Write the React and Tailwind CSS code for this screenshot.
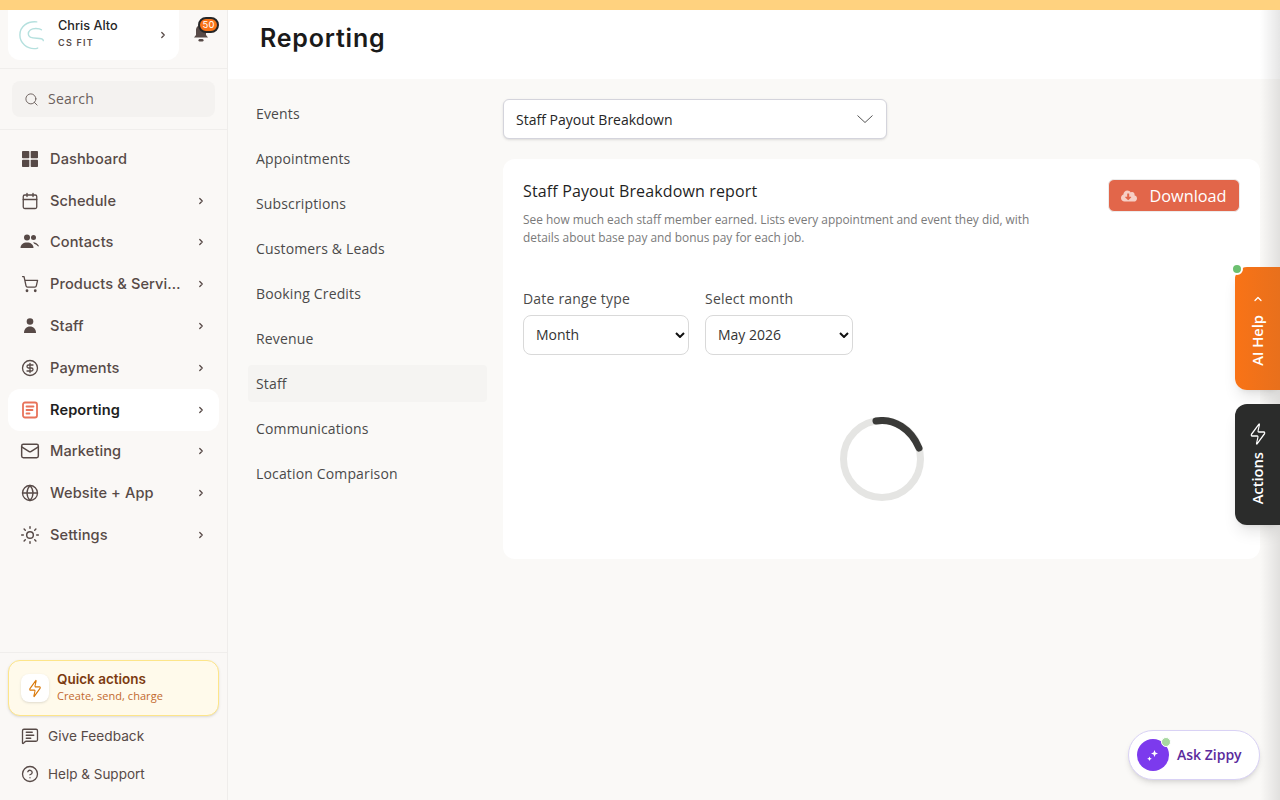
import { ChevronRight, ChevronUp, Search, Calendar, ShoppingCart, CircleDollarSign, Mail, Globe, Sun, MessageSquareText, CircleHelp, Zap } from "lucide-react";
import { FaCloudDownloadAlt } from "react-icons/fa";

const NAV = [
  { label: "Dashboard", icon: DashIcon, noArrow: true },
  { label: "Schedule", icon: Calendar },
  { label: "Contacts", icon: ContactsIcon, big: true },
  { label: "Products & Services", icon: ShoppingCart },
  { label: "Staff", icon: StaffIcon },
  { label: "Payments", icon: CircleDollarSign },
  { label: "Reporting", icon: ReportIcon, active: true },
  { label: "Marketing", icon: Mail, big: true },
  { label: "Website + App", icon: Globe },
  { label: "Settings", icon: Sun, big: true },
];

const REPORTS = ["Events", "Appointments", "Subscriptions", "Customers & Leads", "Booking Credits", "Revenue", "Staff", "Communications", "Location Comparison"];

function DashIcon({ className }) {
  return (
    <svg viewBox="0 0 18 18" className={className} fill="currentColor">
      <rect x="1" y="1" width="7.300" height="7.300" rx="0.800" />
      <rect x="9.700" y="1" width="7.300" height="7.300" rx="0.800" />
      <rect x="1" y="9.700" width="7.300" height="7.300" rx="0.800" />
      <rect x="9.700" y="9.700" width="7.300" height="7.300" rx="0.800" />
    </svg>
  );
}

function ContactsIcon({ className }) {
  return (
    <svg viewBox="0 0 20 18" className={className} fill="currentColor">
      <circle cx="7" cy="4.500" r="3" />
      <circle cx="13.500" cy="4.500" r="2.500" />
      <path d="M0.500 15c0-3.500 2.800-5.500 6.500-5.500s6.500 2 6.500 5.500z" />
      <path d="M13 9.200c2.500 0 4.800 1.300 6 3.800l-.8.500c-1-1.300-2.700-2.300-4-2.800z" />
    </svg>
  );
}

function StaffIcon({ className }) {
  return (
    <svg viewBox="0 0 18 18" className={className} fill="currentColor">
      <circle cx="9" cy="4.500" r="3.300" />
      <path d="M3 16c0-3.900 2.500-6.500 6-6.500s6 2.600 6 6.500z" />
    </svg>
  );
}

function ReportIcon({ className }) {
  return (
    <svg viewBox="0 0 18 18" className={className} fill="none" stroke="currentColor" strokeWidth="1.800" strokeLinecap="round">
      <rect x="2" y="1.500" width="14" height="15" rx="2" />
      <path d="M5.500 5.500h7M5.500 9h6M5.500 12.500h3" />
    </svg>
  );
}

function Logo() {
  return (
    <svg viewBox="0 0 32 32" className="w-[30px] h-[30px]" fill="none" stroke="#b5e0de" strokeWidth="1.500" strokeLinecap="round">
      <path d="M20 2C10 1 2 7 2 16s8 14.500 15 14.500c2 0 3-.2 4-.6" />
      <path d="M25 10.500c-1-1-3-1.500-6-1.500-5 0-8 2.500-8 6s4 4.500 9 4.500c5 0 7 .8 7 2.500" />
    </svg>
  );
}

function Sparkle({ className }) {
  return (
    <svg viewBox="0 0 16 16" className={className} fill="currentColor">
      <path d="M9.500 3l1 2.500 2.500 1-2.500 1-1 2.500-1-2.500-2.500-1 2.500-1z" />
      <path d="M4.500 9.500l.7 1.600 1.600.7-1.600.7-.7 1.600-.7-1.600-1.600-.7 1.600-.7z" />
    </svg>
  );
}

function NavItem({ item }) {
  const Icon = item.icon;
  return (
    <div className={`h-[41.8px] flex items-center pl-[13px] pr-[12px] rounded-xl ${item.active ? "bg-white text-[#1f1f1f] font-semibold" : "text-[#574a47] font-medium"}`}>
      <Icon className={`shrink-0 ${item.big ? "w-[20px] h-[20px] -mx-[1px]" : "w-[18px] h-[18px]"} ${item.active ? "text-[#e8735a]" : "text-[#574a47]"}`} strokeWidth={1.75} />
      <span className="ml-[11px] w-[132px] truncate text-[14.6px] tracking-[0.1px] leading-5">{item.label}</span>
      {!item.noArrow && <ChevronRight className="ml-auto w-[10px] h-[10px] mr-[1px] text-[#574a47]" strokeWidth={3} />}
    </div>
  );
}

function Sidebar() {
  return (
    <aside className="w-[228px] shrink-0 h-full flex flex-col bg-[#faf8f6] border-r border-[#efedeb] font-['Inter',sans-serif]">
      <div className="h-[59px] shrink-0 flex items-start pl-2 border-b border-[#f0eeec]">
        <div className="w-[171px] h-[50px] bg-white rounded-b-xl flex items-center pl-[10px] pr-[11px]">
          <Logo />
          <div className="ml-[10px] flex flex-col -mt-[3px]">
            <span className="text-[12.7px] leading-4 font-medium text-[#262626]">Chris Alto</span>
            <span className="mt-[3px] text-[9px] leading-3 font-semibold tracking-[0.14em] text-[#574a47]">CS FIT</span>
          </div>
          <ChevronRight className="ml-auto w-[10px] h-[10px] text-[#574a47]" strokeWidth={3} />
        </div>
        <div className="relative ml-[14px] mt-[14px]">
          <svg viewBox="0 0 16 19" className="w-4 h-[19px]" fill="#574a47">
            <path d="M8 1c3 0 5 2.300 5 5.500V11l2 2.500H1L3 11V6.500C3 3.300 5 1 8 1z" />
            <rect x="5.500" y="15" width="5" height="2.500" rx="1.200" />
          </svg>
          <span className="absolute -top-[7px] left-[5px] w-[21px] h-[16px] flex items-center justify-center rounded-full bg-[#f97316] border-2 border-[#262626] text-[9.5px] leading-none text-white">50</span>
        </div>
      </div>
      <div className="h-[61px] shrink-0 flex items-center px-3 border-b border-[#f0eeec]">
        <div className="w-full h-9 rounded-lg bg-[#f4f2f0] flex items-center pl-3 text-[#6b5f5c]">
          <Search className="w-[15px] h-[15px]" strokeWidth={1.5} />
          <span className="ml-[9px] text-sm font-['Open_Sans',sans-serif] tracking-[0.02em]">Search</span>
        </div>
      </div>
      <nav className="mt-[8px] px-2 flex flex-col">
        {NAV.map((item) => <NavItem key={item.label} item={item} />)}
      </nav>
      <div className="mt-auto border-t border-[#f0eeec] pt-[7px] px-2 pb-[7px]">
        <div className="h-[56px] flex items-center pl-[12px] rounded-xl bg-[#fffaeb] border border-[#fde58a] shadow-sm">
          <div className="w-7 h-7 rounded-lg bg-white flex items-center justify-center shadow-sm">
            <Zap className="w-[14px] h-[19px] text-[#d97706]" strokeWidth={1.75} preserveAspectRatio="none" />
          </div>
          <div className="ml-2 flex flex-col -mt-[3px]">
            <span className="text-[13.5px] leading-[18px] font-semibold text-[#7c3a10]">Quick actions</span>
            <span className="text-[11px] leading-[15px] tracking-[0.05px] text-[#c2692e] font-['Open_Sans',sans-serif]">Create, send, charge</span>
          </div>
        </div>
        <div className="h-[38px] mt-[1px] flex items-center pl-[13px] text-[#574a47]">
          <MessageSquareText className="w-[18px] h-[18px]" strokeWidth={1.75} />
          <span className="ml-[9px] text-[13.7px]">Give Feedback</span>
        </div>
        <div className="h-[38px] flex items-center pl-[13px] text-[#574a47]">
          <CircleHelp className="w-[18px] h-[18px]" strokeWidth={1.75} />
          <span className="ml-[9px] text-[13.5px]">Help & Support</span>
        </div>
      </div>
    </aside>
  );
}

function MonthSelect({ label, value, width }) {
  return (
    <label className="flex flex-col gap-[6px] text-sm text-[#4a4a4a]">
      <span className="leading-5 mt-[1px] tracking-[0.2px]">{label}</span>
      <div className="relative">
        <select defaultValue={value} className={`${width} h-10 pl-3 appearance-none bg-white border border-[#d9d9d9] rounded-lg text-sm text-[#333]`}>
          <option>{value}</option>
        </select>
        <svg viewBox="0 0 10 6" className="absolute right-[4px] top-[17px] w-[10px] h-[6px] pointer-events-none" fill="none" stroke="#111" strokeWidth="2">
          <path d="M1 1l4 4 4-4" />
        </svg>
      </div>
    </label>
  );
}

function ReportBody() {
  return (
    <div className="flex-1 flex pl-5 pr-5 pt-5 font-['Open_Sans',sans-serif]">
      <ul className="w-[239px] shrink-0 flex flex-col gap-[8px] -mt-[4px]">
        {REPORTS.map((r) => (
          <li key={r} className={`h-[37px] flex items-center px-2 rounded text-sm tracking-[0.15px] text-[#4a4a4a] ${r === "Staff" ? "bg-[#f5f4f2]" : ""}`}>{r}</li>
        ))}
      </ul>
      <div className="ml-4 flex-1 min-w-0">
        <div className="w-[384px] h-10 flex items-center justify-between pl-3 pr-[13px] bg-white border border-[#d4d4dc] rounded-md text-sm text-[#262626] shadow-sm">
          <span className="mt-[1px]">Staff Payout Breakdown</span>
          <svg viewBox="0 0 16 8" className="w-4 h-2" fill="none" stroke="#555" strokeWidth="1">
            <path d="M.5 .5L8 7.500 15.500 .5" />
          </svg>
        </div>
        <section className="mt-5 h-[400px] bg-white rounded-xl p-5">
          <div className="flex justify-between items-start">
            <div className="w-[520px]">
              <h2 className="text-base leading-6 tracking-[0.14px] text-[#1f1f1f]">Staff Payout Breakdown report</h2>
              <p className="mt-[7px] text-[11.9px] leading-[18px] text-[#7a7a7a]">See how much each staff member earned. Lists every appointment and event they did, with details about base pay and bonus pay for each job.</p>
            </div>
            <button className="h-[33px] w-[132px] pt-[1px] flex items-center justify-center gap-3 rounded-md bg-[#e2664a] border border-[#ececec] text-white text-[16.3px]">
              <FaCloudDownloadAlt className="w-4 h-4 text-[#f6cfc5]" />
              Download
            </button>
          </div>
          <div className="mt-[42px] flex gap-4">
            <MonthSelect label="Date range type" value="Month" width="w-[166px]" />
            <MonthSelect label="Select month" value="May 2026" width="w-[148px]" />
          </div>
          <div className="mt-[62px] flex justify-center">
            <svg viewBox="0 0 84 84" className="w-[84px] h-[84px]" fill="none" strokeWidth="7">
              <circle cx="42" cy="42" r="38.500" stroke="#e5e5e3" />
              <path d="M36 4c18-3 35 8 43 27" stroke="#3a3a38" strokeLinecap="round" />
            </svg>
          </div>
        </section>
      </div>
    </div>
  );
}

export default function App() {
  return (
    <div className="relative h-[800px] overflow-hidden bg-[#faf9f7]">
      <div className="h-[10px] bg-[#ffd27f]" />
      <div className="flex h-[790px]">
        <Sidebar />
        <main className="flex-1 min-w-0 flex flex-col">
          <header className="h-[69px] shrink-0 flex items-center pl-8 bg-white pb-[11px]">
            <h1 className="text-[25px] font-semibold tracking-[0.8px] text-[#1a1a1a] font-['Inter',sans-serif]">Reporting</h1>
          </header>
          <ReportBody />
        </main>
      </div>

      {/* right edge fade */}
      <div className="absolute top-[10px] bottom-0 right-0 w-5 bg-gradient-to-r from-transparent to-black/10 pointer-events-none" />

      <div className="absolute right-0 top-[267px] w-[45px] h-[123px] pt-[26px] flex flex-col items-center rounded-l-xl bg-gradient-to-r from-[#f97316] to-[#e8701c] text-white text-[14.7px] font-semibold font-['Open_Sans',sans-serif] shadow-lg">
        <ChevronUp className="w-3 h-3 mb-[10px]" strokeWidth={2.5} />
        <span className="[writing-mode:vertical-rl] rotate-180 leading-none">AI Help</span>
        <span className="absolute -top-[4px] -left-[4px] w-[12px] h-[12px] rounded-full bg-[#6cc070] border-2 border-white" />
      </div>
      <div className="absolute right-0 top-[404px] w-[45px] h-[121px] pt-[18px] flex flex-col items-center rounded-l-xl bg-[#2b2c2b] text-white text-[14.7px] font-semibold font-['Open_Sans',sans-serif] shadow-lg">
        <Zap className="w-[18px] h-[24px] mb-[6px]" strokeWidth={1.5} preserveAspectRatio="none" />
        <span className="[writing-mode:vertical-rl] rotate-180 leading-none">Actions</span>
      </div>

      <div className="absolute right-5 bottom-5 w-[132px] h-[50px] flex items-center pl-2 rounded-full bg-white border border-[#d9d2f5] shadow-md font-['Open_Sans',sans-serif]">
        <div className="relative w-8 h-8 rounded-full bg-[#7c3aed] flex items-center justify-center text-white">
          <Sparkle className="w-4 h-4" />
          <span className="absolute -top-[2px] -right-[2px] w-[10px] h-[10px] rounded-full bg-[#a8d8a0] border border-white" />
        </div>
        <span className="ml-2 text-sm font-semibold text-[#5b2a9d]">Ask Zippy</span>
      </div>
    </div>
  );
}
